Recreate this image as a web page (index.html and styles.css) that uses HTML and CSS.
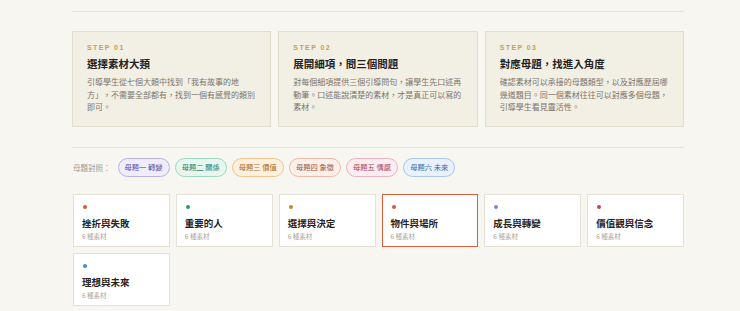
FILE: index.html
```html
<!DOCTYPE html>
<html lang="zh-Hant">
  <head>
    <meta charset="UTF-8" />
    <meta name="viewport" content="width=device-width, initial-scale=1.0" />
    <title>素材分類</title>
    <link rel="stylesheet" href="styles.css">
  </head>
  <body>
    <div class="container">
        <div class="steps">
            <div class="step-card">
                <div class="step-label">STEP 01</div>
                <div class="step-title">選擇素材大類</div>
                <div class="step-desc">引導學生從七個大類中找到「我有故事的地方」，不需要全部都有，找到一個有感覺的類別即可。</div>
            </div>
            <div class="step-card">
                <div class="step-label">STEP 02</div>
                <div class="step-title">展開細項，問三個問題</div>
                <div class="step-desc">對每個細項提供三個引導問句，讓學生先口述再動筆。口述能說清楚的素材，才是真正可以寫的素材。</div>
            </div>
            <div class="step-card">
                <div class="step-label">STEP 03</div>
                <div class="step-title">對應母題，找進入角度</div>
                <div class="step-desc">確認素材可以承接的母題類型，以及對應歷屆哪幾道題目。同一個素材往往可以對應多個母題，引導學生看見靈活性。</div>
            </div>
        </div>

        <div class="theme-row">
            <span class="theme-label">母題對照：</span>
            <span class="chip chip-1">母題一 轉變</span>
            <span class="chip chip-2">母題二 關係</span>
            <span class="chip chip-3">母題三 價值</span>
            <span class="chip chip-4">母題四 象徵</span>
            <span class="chip chip-5">母題五 情感</span>
            <span class="chip chip-6">母題六 未來</span>
        </div>

        <div class="category-grid">
            <div class="category-card">
                <span class="dot dot-red"></span>
                <div class="category-name">挫折與失敗</div>
                <div class="category-count">6 種素材</div>
            </div>
            <div class="category-card">
                <span class="dot dot-green"></span>
                <div class="category-name">重要的人</div>
                <div class="category-count">6 種素材</div>
            </div>
            <div class="category-card">
                <span class="dot dot-amber"></span>
                <div class="category-name">選擇與決定</div>
                <div class="category-count">6 種素材</div>
            </div>
            <div class="category-card active">
                <span class="dot dot-orange"></span>
                <div class="category-name">物件與場所</div>
                <div class="category-count">6 種素材</div>
            </div>
            <div class="category-card">
                <span class="dot dot-purple"></span>
                <div class="category-name">成長與轉變</div>
                <div class="category-count">6 種素材</div>
            </div>
            <div class="category-card">
                <span class="dot dot-rose"></span>
                <div class="category-name">價值觀與信念</div>
                <div class="category-count">6 種素材</div>
            </div>
            <div class="category-card">
                <span class="dot dot-blue"></span>
                <div class="category-name">理想與未來</div>
                <div class="category-count">6 種素材</div>
            </div>
        </div>
    </div>
  </body>
</html>
```

FILE: styles.css
```css
* {
    margin: 0;
    padding: 0;
    box-sizing: border-box;
}

body {
    font-family: "Noto Sans CJK TC", "Noto Sans", sans-serif;
    background: #f8f6f0;
    color: #2b2824;
    padding-top: 11px;
}

.container {
    width: 612px;
    margin-left: 72px;
}

.steps {
    display: grid;
    grid-template-columns: repeat(3, 1fr);
    gap: 7px;
    border-top: 1px solid #e7e3d8;
    border-bottom: 1px solid #e7e3d8;
    padding: 19px 0 20px;
}

.step-card {
    background: #f2efe5;
    border: 1px solid #e2ddcc;
    padding: 12px 14px;
}

.step-label {
    font-family: "Liberation Sans", sans-serif;
    font-size: 7px;
    line-height: 8px;
    font-weight: bold;
    letter-spacing: 1.4px;
    color: #c9a04e;
    margin-bottom: 6px;
}

.step-title {
    font-family: "Liberation Serif", "Noto Sans CJK TC", serif;
    font-size: 10.5px;
    line-height: 13px;
    font-weight: bold;
    color: #25221e;
    margin-bottom: 5px;
}

.step-desc {
    font-size: 8px;
    line-height: 12.5px;
    color: #7a756c;
}

.theme-row {
    display: flex;
    align-items: center;
    gap: 5px;
    margin-top: 10px;
    padding-left: 1px;
}

.theme-label {
    font-size: 7.5px;
    color: #a09b92;
    margin-right: 2px;
}

.chip {
    height: 19px;
    display: flex;
    align-items: center;
    padding: 0 6px;
    border-radius: 10px;
    border: 1px solid;
    font-size: 7.3px;
}

.chip-1 { background: #efecfb; border-color: #b9b0ea; color: #5a4fa6; }
.chip-2 { background: #e7f6ef; border-color: #9fd9c1; color: #2e7c61; }
.chip-3 { background: #fdf0df; border-color: #f0c48c; color: #a66a22; }
.chip-4 { background: #fcefea; border-color: #edbaab; color: #a4553e; }
.chip-5 { background: #fcedf1; border-color: #ebb3c3; color: #a64463; }
.chip-6 { background: #e9f1fc; border-color: #a9c6ec; color: #3e69a2; }

.category-grid {
    display: grid;
    grid-template-columns: repeat(6, 1fr);
    gap: 6px;
    margin-top: 17px;
    padding-left: 1px;
}

.category-card {
    background: #ffffff;
    border: 1px solid #e6e1d4;
    padding: 10px 8px 9px;
    height: 53px;
}

.category-card.active {
    border: 1.5px solid #d9603b;
}

.dot {
    display: block;
    width: 4px;
    height: 4px;
    border-radius: 50%;
    margin: 0 0 9px 1px;
}

.dot-red { background: #d8593a; }
.dot-green { background: #279c77; }
.dot-amber { background: #c98a2a; }
.dot-orange { background: #d4583d; }
.dot-purple { background: #8b7cd8; }
.dot-rose { background: #c34669; }
.dot-blue { background: #3d8ed8; }

.category-name {
    font-size: 9.5px;
    line-height: 11px;
    font-weight: bold;
    color: #26231f;
    margin-bottom: 3px;
}

.category-count {
    font-size: 6.5px;
    line-height: 8px;
    color: #a9a49a;
}
```
